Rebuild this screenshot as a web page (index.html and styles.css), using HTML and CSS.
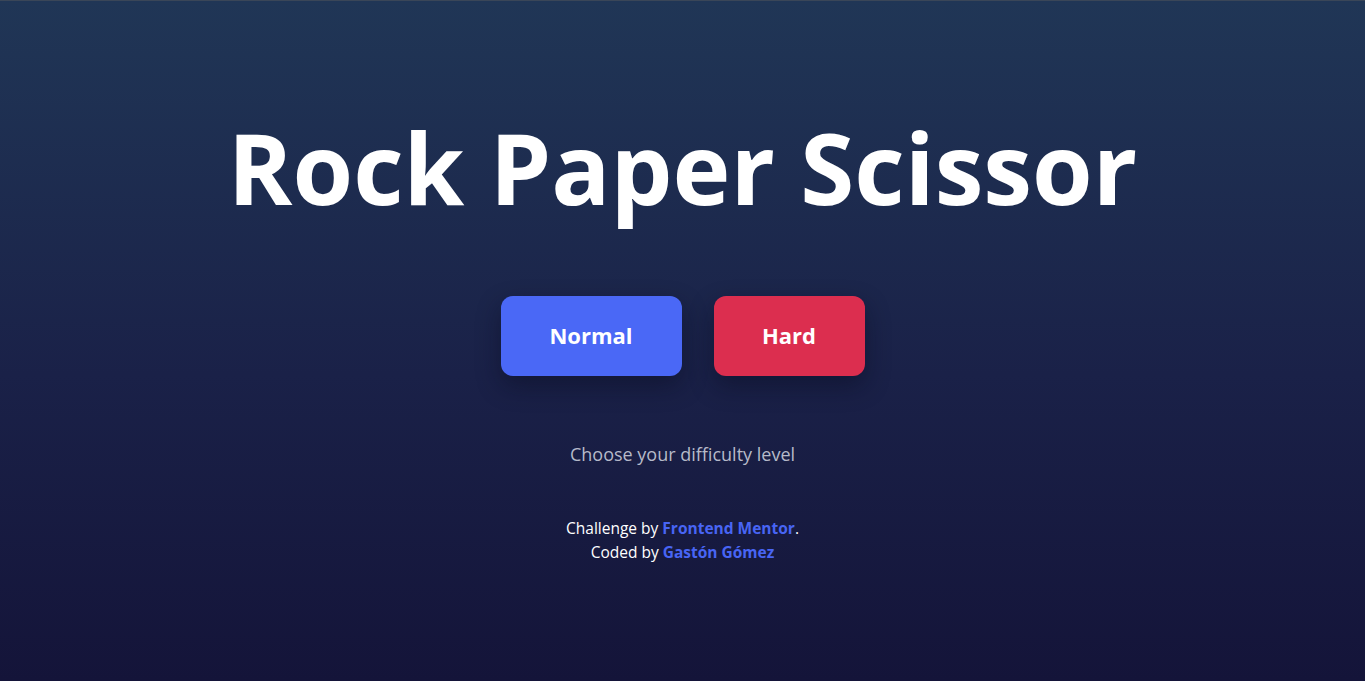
FILE: index.html
```html
<!DOCTYPE html>
<html lang="en">
<head>
<meta charset="utf-8">
<title>Rock Paper Scissor</title>
<link rel="stylesheet" href="styles.css">
</head>
<body>
<main class="page">
  <h1 class="title">Rock Paper Scissor</h1>
  <div class="modes">
    <button class="mode mode-normal">Normal</button>
    <button class="mode mode-hard">Hard</button>
  </div>
  <p class="hint">Choose your difficulty level</p>
  <footer class="attribution">
    <div>Challenge by <a href="#">Frontend Mentor</a>.</div>
    <div>Coded by <a href="#">Gastón Gómez</a></div>
  </footer>
</main>
</body>
</html>
```

FILE: styles.css
```css
* { box-sizing: border-box; }
html, body { margin: 0; height: 100%; }
body {
  font-family: "Open Sans", "Noto Sans", sans-serif;
  background: linear-gradient(180deg, #203656 0%, #1a2148 55%, #141439 100%);
  border-top: 1px solid #3a4658;
  color: #fff;
  min-height: 100vh;
}
.page {
  display: flex;
  flex-direction: column;
  align-items: center;
}
.title {
  margin: 117px 0 0;
  font-size: 98px;
  line-height: 98px;
  font-weight: 700;
  letter-spacing: 0;
}
.modes {
  display: flex;
  gap: 32px;
  margin-top: 80px;
}
.mode {
  height: 80px;
  padding: 0 48px 2px;
  border: 0;
  border-radius: 12px;
  color: #fff;
  font-family: inherit;
  font-size: 22px;
  font-weight: 700;
  box-shadow: 0 10px 24px rgba(8, 10, 30, 0.45);
  cursor: pointer;
}
.mode-normal { width: 181px; background: #4a68f6; }
.mode-hard { width: 151px; background: #dc2e4f; }
.hint {
  margin: 66px 0 0;
  font-size: 18px;
  line-height: 24px;
  color: #b6bac9;
}
.attribution {
  margin-top: 50px;
  font-size: 15.5px;
  line-height: 24px;
  text-align: center;
}
.attribution a {
  color: #4865f4;
  font-weight: 700;
  text-decoration: none;
}
```
